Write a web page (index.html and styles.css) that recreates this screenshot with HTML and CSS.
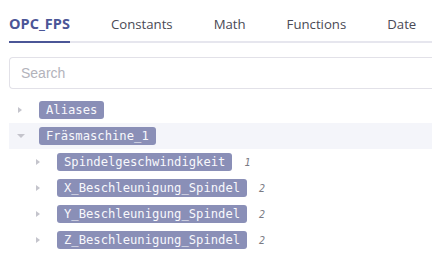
FILE: index.html
```html
<!DOCTYPE html>
<html>
<head>
<meta charset="utf-8">
<link rel="stylesheet" href="styles.css">
</head>
<body>
<div class="panel">
  <nav class="tabs">
    <div class="tab active">OPC_FPS</div>
    <div class="tab">Constants</div>
    <div class="tab">Math</div>
    <div class="tab">Functions</div>
    <div class="tab">Date</div>
  </nav>
  <div class="search"><input class="search-input" type="text" placeholder="Search"></div>
  <div class="tree">
    <div class="row">
      <span class="toggle"><span class="tri-right"></span></span>
      <span class="label">Aliases</span>
    </div>
    <div class="row selected">
      <span class="toggle"><span class="tri-down"></span></span>
      <span class="label">Fräsmaschine_1</span>
    </div>
    <div class="row child">
      <span class="toggle"><span class="tri-right"></span></span>
      <span class="label">Spindelgeschwindigkeit</span>
      <span class="count">1</span>
    </div>
    <div class="row child">
      <span class="toggle"><span class="tri-right"></span></span>
      <span class="label">X_Beschleunigung_Spindel</span>
      <span class="count">2</span>
    </div>
    <div class="row child">
      <span class="toggle"><span class="tri-right"></span></span>
      <span class="label">Y_Beschleunigung_Spindel</span>
      <span class="count">2</span>
    </div>
    <div class="row child">
      <span class="toggle"><span class="tri-right"></span></span>
      <span class="label">Z_Beschleunigung_Spindel</span>
      <span class="count">2</span>
    </div>
  </div>
</div>
</body>
</html>
```
FILE: styles.css
```css
html, body {
  margin: 0;
  padding: 0;
  background: #ffffff;
  overflow: hidden;
}
.panel {
  padding-left: 9px;
}
.tabs {
  display: flex;
  gap: 41px;
  border-bottom: 2px solid #e6e6ee;
  font-family: "Open Sans", sans-serif;
  font-size: 13.2px;
  color: #4a4a55;
}
.tab {
  padding-top: 14px;
  padding-bottom: 7px;
  line-height: 20px;
  border-bottom: 2px solid transparent;
  margin-bottom: -2px;
}
.tab.active {
  font-weight: 700;
  font-size: 14.5px;
  color: #4b5697;
  border-bottom-color: #4b5697;
}
.search {
  margin-top: 14px;
}
.search-input {
  box-sizing: border-box;
  width: 100%;
  height: 32px;
  border: 1px solid #e2e1e8;
  border-right: none;
  border-radius: 4px 0 0 4px;
  padding: 0 11px;
  font-family: "Liberation Sans", Arial, sans-serif;
  font-size: 14px;
  color: #333;
  outline: none;
  display: block;
}
.search-input::placeholder {
  color: #b3b3bb;
}
.tree {
  margin-top: 8px;
}
.row {
  display: flex;
  align-items: center;
  height: 26px;
}
.row.selected {
  background: #f4f5fa;
}
.row.child {
  padding-left: 18px;
}
.toggle {
  width: 22px;
  height: 26px;
  display: flex;
  align-items: center;
  justify-content: center;
  margin-right: 8px;
}
.tri-right {
  width: 0;
  height: 0;
  border-top: 3.5px solid transparent;
  border-bottom: 3.5px solid transparent;
  border-left: 4px solid #c4c4cc;
}
.tri-down {
  width: 0;
  height: 0;
  border-left: 4px solid transparent;
  border-right: 4px solid transparent;
  border-top: 4px solid #c4c4cc;
  margin-left: 1px;
}
.label {
  background: #8a8fb7;
  color: #f8f8fc;
  border-radius: 3px;
  padding: 0 7px;
  height: 18px;
  line-height: 18px;
  font-family: "DejaVu Sans Mono", "Liberation Mono", monospace;
  font-size: 12.2px;
  white-space: nowrap;
}
.count {
  margin-left: 12px;
  font-family: "DejaVu Sans Mono", monospace;
  font-style: italic;
  font-size: 10px;
  color: #7a7a84;
}
```
